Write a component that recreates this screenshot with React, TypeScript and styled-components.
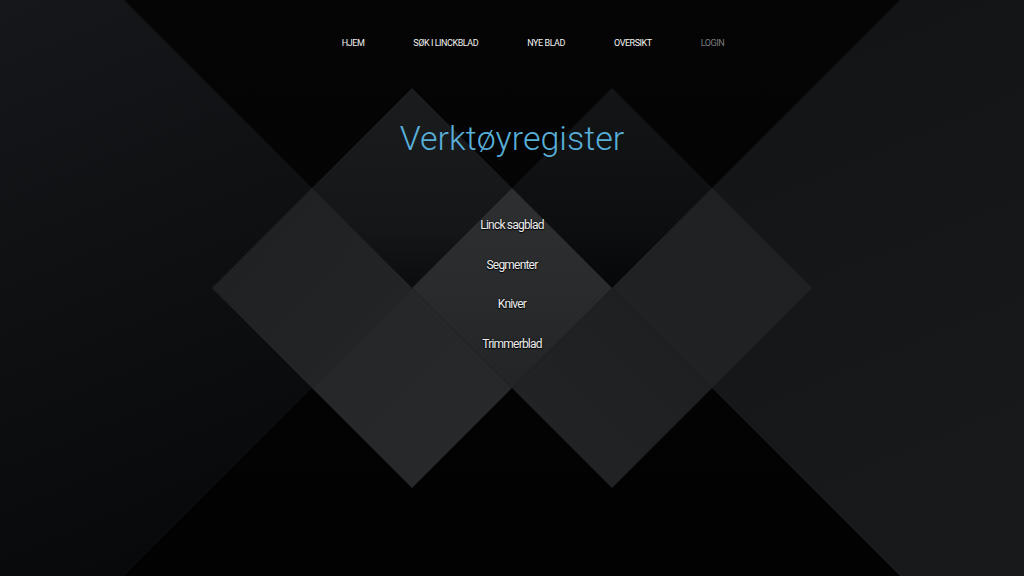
import styled, { createGlobalStyle } from "styled-components";

const GlobalStyle = createGlobalStyle`
    html, body {
        margin: 0;
        padding: 0;
        background: #030303;
        height: 100%;
    }
    body {
        font-family: Roboto, "Liberation Sans", sans-serif;
        color: #f0f0f0;
        overflow: hidden;
    }
`;

const Page = styled.div`
    position: relative;
    width: 100%;
    height: 576px;
    overflow: hidden;
`;

const Backdrop = styled.svg`
    position: absolute;
    inset: 0;
    width: 100%;
    height: 100%;
    z-index: 0;
`;

const Content = styled.div`
    position: relative;
    z-index: 1;
    display: flex;
    flex-direction: column;
    align-items: center;
`;

const Nav = styled.nav`
    display: flex;
    gap: 49px;
    padding: 37px 0 0 42px;
`;

const NavLink = styled.a<{ $muted?: boolean }>`
    font-size: 9px;
    line-height: 12px;
    letter-spacing: -0.45px;
    text-transform: uppercase;
    text-decoration: none;
    color: ${(props) => (props.$muted ? "#7d7d7d" : "#f2f2f2")};
    cursor: pointer;
`;

const Title = styled.h1`
    margin: 69px 0 0;
    font-size: 34px;
    line-height: 40px;
    font-weight: 300;
    letter-spacing: 0px;
    color: #58afd9;
`;

const Menu = styled.ul`
    list-style: none;
    margin: 60px 0 0;
    padding: 0;
    display: flex;
    flex-direction: column;
    align-items: center;
    gap: 25px;
`;

const MenuItem = styled.li`
    font-size: 12px;
    line-height: 14.5px;
    letter-spacing: -0.8px;
    color: #ededed;
    text-shadow: 0 1px 1px rgba(0, 0, 0, 0.9), 0 0 2px rgba(0, 0, 0, 0.8);
    cursor: pointer;
`;

const navItems = ["Hjem", "Søk i Linckblad", "Nye blad", "Oversikt"];
const menuItems = ["Linck sagblad", "Segmenter", "Kniver", "Trimmerblad"];

function Pattern() {
    return (
        <Backdrop viewBox="0 0 1024 576" preserveAspectRatio="none">
            <defs>
                <linearGradient id="hugeL" x1="0" y1="0" x2="0.3" y2="1">
                    <stop offset="0" stopColor="#15171a" />
                    <stop offset="1" stopColor="#07090b" />
                </linearGradient>
                <linearGradient id="hugeR" x1="0" y1="0" x2="0.3" y2="1">
                    <stop offset="0" stopColor="#111315" />
                    <stop offset="1" stopColor="#18191b" />
                </linearGradient>
                <linearGradient id="cellLT" x1="0" y1="0" x2="0" y2="1">
                    <stop offset="0" stopColor="#1a1c1e" />
                    <stop offset="0.7" stopColor="#141618" />
                    <stop offset="1" stopColor="#0b0c0d" />
                </linearGradient>
                <linearGradient id="cellRT" x1="0" y1="0" x2="0" y2="1">
                    <stop offset="0" stopColor="#131517" />
                    <stop offset="0.7" stopColor="#0c0e10" />
                    <stop offset="1" stopColor="#060708" />
                </linearGradient>
                <linearGradient id="cellLL" x1="0" y1="0" x2="1" y2="1">
                    <stop offset="0" stopColor="#1e2022" />
                    <stop offset="1" stopColor="#232527" />
                </linearGradient>
                <linearGradient id="cellRR" x1="1" y1="0" x2="0" y2="1">
                    <stop offset="0" stopColor="#1e2022" />
                    <stop offset="1" stopColor="#202224" />
                </linearGradient>
                <linearGradient id="cellLB" x1="0" y1="0" x2="1" y2="1">
                    <stop offset="0" stopColor="#242628" />
                    <stop offset="1" stopColor="#27292b" />
                </linearGradient>
                <linearGradient id="cellRB" x1="1" y1="0" x2="0" y2="1">
                    <stop offset="0" stopColor="#1c1e20" />
                    <stop offset="1" stopColor="#222426" />
                </linearGradient>
                <linearGradient id="cellC" x1="0" y1="0" x2="0" y2="1">
                    <stop offset="0" stopColor="#2d2f31" />
                    <stop offset="0.5" stopColor="#292b2d" />
                    <stop offset="1" stopColor="#222426" />
                </linearGradient>
                <linearGradient id="blackFade" x1="0" y1="0" x2="0" y2="1">
                    <stop offset="0" stopColor="#050505" />
                    <stop offset="1" stopColor="#020202" />
                </linearGradient>
            </defs>
            <rect x="0" y="0" width="1024" height="576" fill="url(#blackFade)" />
            <polygon points="0,0 124,0 412,288 124,576 0,576" fill="url(#hugeL)" />
            <polygon points="900,0 1024,0 1024,576 900,576 612,288" fill="url(#hugeR)" />
            <polygon points="312,188 412,88 512,188 412,288" fill="url(#cellLT)" />
            <polygon points="512,188 612,88 712,188 612,288" fill="url(#cellRT)" />
            <polygon points="212,288 312,188 412,288 312,388" fill="url(#cellLL)" />
            <polygon points="612,288 712,188 812,288 712,388" fill="url(#cellRR)" />
            <polygon points="312,388 412,288 512,388 412,488" fill="url(#cellLB)" />
            <polygon points="512,388 612,288 712,388 612,488" fill="url(#cellRB)" />
            <polygon points="412,288 512,188 612,288 512,388" fill="url(#cellC)" />
        </Backdrop>
    );
}

function App() {
    return (
        <Page>
            <GlobalStyle />
            <Pattern />
            <Content>
                <Nav>
                    {navItems.map((item) => (
                        <NavLink key={item}>{item}</NavLink>
                    ))}
                    <NavLink $muted>Login</NavLink>
                </Nav>
                <Title>Verktøyregister</Title>
                <Menu>
                    {menuItems.map((item) => (
                        <MenuItem key={item}>{item}</MenuItem>
                    ))}
                </Menu>
            </Content>
        </Page>
    );
}

export default App;
